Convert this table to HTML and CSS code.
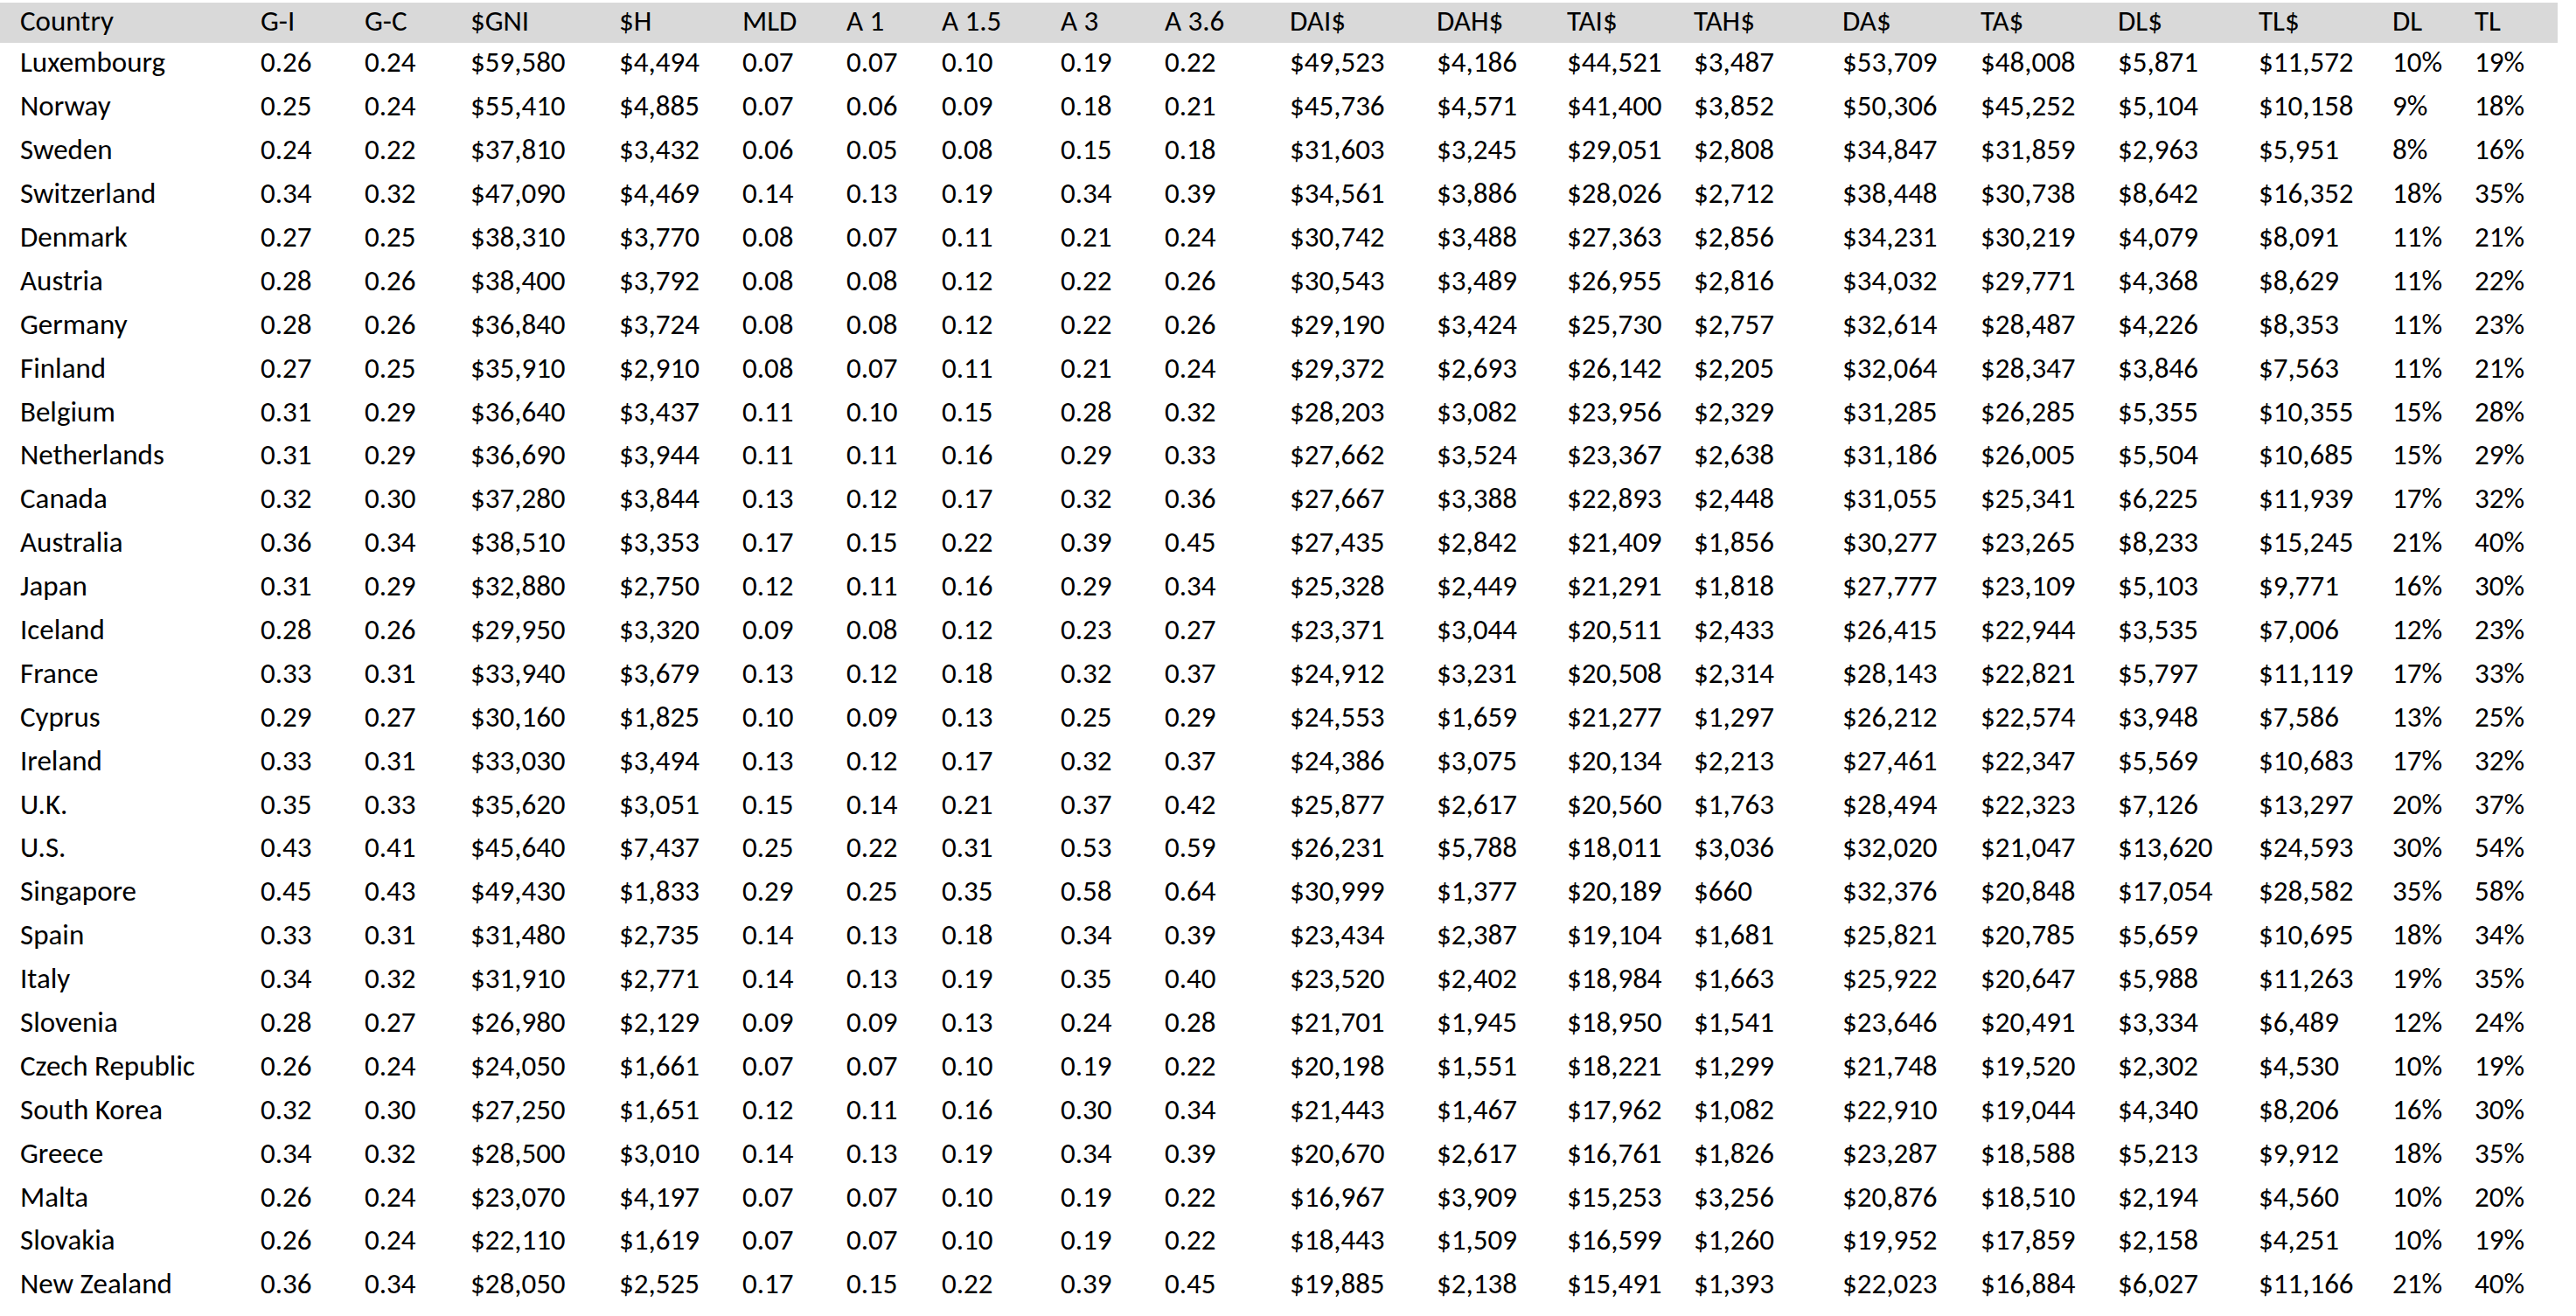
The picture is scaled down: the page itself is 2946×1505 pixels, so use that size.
FILE: index.html
```html
<!DOCTYPE html>
<html lang="en">
<head>
<meta charset="utf-8">
<title>Country inequality table</title>
<link rel="stylesheet" href="styles.css">
</head>
<body>
<table class="data">
<colgroup>
<col class="col-country"><col class="col-gi"><col class="col-gc"><col class="col-gni"><col class="col-h"><col class="col-mld"><col class="col-a1"><col class="col-a15"><col class="col-a3"><col class="col-a36"><col class="col-dai"><col class="col-dah"><col class="col-tai"><col class="col-tah"><col class="col-da"><col class="col-ta"><col class="col-dl-usd"><col class="col-tl-usd"><col class="col-dl"><col class="col-tl">
</colgroup>
<thead>
<tr class="head"><th class="first">Country</th><th>G-I</th><th>G-C</th><th>$GNI</th><th>$H</th><th>MLD</th><th>A 1</th><th>A 1.5</th><th>A 3</th><th>A 3.6</th><th>DAI$</th><th>DAH$</th><th>TAI$</th><th>TAH$</th><th>DA$</th><th>TA$</th><th>DL$</th><th>TL$</th><th>DL</th><th>TL</th></tr>
</thead>
<tbody>
<tr><td class="first">Luxembourg</td><td>0.26</td><td>0.24</td><td>$59,580</td><td>$4,494</td><td>0.07</td><td>0.07</td><td>0.10</td><td>0.19</td><td>0.22</td><td>$49,523</td><td>$4,186</td><td>$44,521</td><td>$3,487</td><td>$53,709</td><td>$48,008</td><td>$5,871</td><td>$11,572</td><td>10%</td><td>19%</td></tr>
<tr><td class="first">Norway</td><td>0.25</td><td>0.24</td><td>$55,410</td><td>$4,885</td><td>0.07</td><td>0.06</td><td>0.09</td><td>0.18</td><td>0.21</td><td>$45,736</td><td>$4,571</td><td>$41,400</td><td>$3,852</td><td>$50,306</td><td>$45,252</td><td>$5,104</td><td>$10,158</td><td>9%</td><td>18%</td></tr>
<tr><td class="first">Sweden</td><td>0.24</td><td>0.22</td><td>$37,810</td><td>$3,432</td><td>0.06</td><td>0.05</td><td>0.08</td><td>0.15</td><td>0.18</td><td>$31,603</td><td>$3,245</td><td>$29,051</td><td>$2,808</td><td>$34,847</td><td>$31,859</td><td>$2,963</td><td>$5,951</td><td>8%</td><td>16%</td></tr>
<tr><td class="first">Switzerland</td><td>0.34</td><td>0.32</td><td>$47,090</td><td>$4,469</td><td>0.14</td><td>0.13</td><td>0.19</td><td>0.34</td><td>0.39</td><td>$34,561</td><td>$3,886</td><td>$28,026</td><td>$2,712</td><td>$38,448</td><td>$30,738</td><td>$8,642</td><td>$16,352</td><td>18%</td><td>35%</td></tr>
<tr><td class="first">Denmark</td><td>0.27</td><td>0.25</td><td>$38,310</td><td>$3,770</td><td>0.08</td><td>0.07</td><td>0.11</td><td>0.21</td><td>0.24</td><td>$30,742</td><td>$3,488</td><td>$27,363</td><td>$2,856</td><td>$34,231</td><td>$30,219</td><td>$4,079</td><td>$8,091</td><td>11%</td><td>21%</td></tr>
<tr><td class="first">Austria</td><td>0.28</td><td>0.26</td><td>$38,400</td><td>$3,792</td><td>0.08</td><td>0.08</td><td>0.12</td><td>0.22</td><td>0.26</td><td>$30,543</td><td>$3,489</td><td>$26,955</td><td>$2,816</td><td>$34,032</td><td>$29,771</td><td>$4,368</td><td>$8,629</td><td>11%</td><td>22%</td></tr>
<tr><td class="first">Germany</td><td>0.28</td><td>0.26</td><td>$36,840</td><td>$3,724</td><td>0.08</td><td>0.08</td><td>0.12</td><td>0.22</td><td>0.26</td><td>$29,190</td><td>$3,424</td><td>$25,730</td><td>$2,757</td><td>$32,614</td><td>$28,487</td><td>$4,226</td><td>$8,353</td><td>11%</td><td>23%</td></tr>
<tr><td class="first">Finland</td><td>0.27</td><td>0.25</td><td>$35,910</td><td>$2,910</td><td>0.08</td><td>0.07</td><td>0.11</td><td>0.21</td><td>0.24</td><td>$29,372</td><td>$2,693</td><td>$26,142</td><td>$2,205</td><td>$32,064</td><td>$28,347</td><td>$3,846</td><td>$7,563</td><td>11%</td><td>21%</td></tr>
<tr><td class="first">Belgium</td><td>0.31</td><td>0.29</td><td>$36,640</td><td>$3,437</td><td>0.11</td><td>0.10</td><td>0.15</td><td>0.28</td><td>0.32</td><td>$28,203</td><td>$3,082</td><td>$23,956</td><td>$2,329</td><td>$31,285</td><td>$26,285</td><td>$5,355</td><td>$10,355</td><td>15%</td><td>28%</td></tr>
<tr><td class="first">Netherlands</td><td>0.31</td><td>0.29</td><td>$36,690</td><td>$3,944</td><td>0.11</td><td>0.11</td><td>0.16</td><td>0.29</td><td>0.33</td><td>$27,662</td><td>$3,524</td><td>$23,367</td><td>$2,638</td><td>$31,186</td><td>$26,005</td><td>$5,504</td><td>$10,685</td><td>15%</td><td>29%</td></tr>
<tr><td class="first">Canada</td><td>0.32</td><td>0.30</td><td>$37,280</td><td>$3,844</td><td>0.13</td><td>0.12</td><td>0.17</td><td>0.32</td><td>0.36</td><td>$27,667</td><td>$3,388</td><td>$22,893</td><td>$2,448</td><td>$31,055</td><td>$25,341</td><td>$6,225</td><td>$11,939</td><td>17%</td><td>32%</td></tr>
<tr><td class="first">Australia</td><td>0.36</td><td>0.34</td><td>$38,510</td><td>$3,353</td><td>0.17</td><td>0.15</td><td>0.22</td><td>0.39</td><td>0.45</td><td>$27,435</td><td>$2,842</td><td>$21,409</td><td>$1,856</td><td>$30,277</td><td>$23,265</td><td>$8,233</td><td>$15,245</td><td>21%</td><td>40%</td></tr>
<tr><td class="first">Japan</td><td>0.31</td><td>0.29</td><td>$32,880</td><td>$2,750</td><td>0.12</td><td>0.11</td><td>0.16</td><td>0.29</td><td>0.34</td><td>$25,328</td><td>$2,449</td><td>$21,291</td><td>$1,818</td><td>$27,777</td><td>$23,109</td><td>$5,103</td><td>$9,771</td><td>16%</td><td>30%</td></tr>
<tr><td class="first">Iceland</td><td>0.28</td><td>0.26</td><td>$29,950</td><td>$3,320</td><td>0.09</td><td>0.08</td><td>0.12</td><td>0.23</td><td>0.27</td><td>$23,371</td><td>$3,044</td><td>$20,511</td><td>$2,433</td><td>$26,415</td><td>$22,944</td><td>$3,535</td><td>$7,006</td><td>12%</td><td>23%</td></tr>
<tr><td class="first">France</td><td>0.33</td><td>0.31</td><td>$33,940</td><td>$3,679</td><td>0.13</td><td>0.12</td><td>0.18</td><td>0.32</td><td>0.37</td><td>$24,912</td><td>$3,231</td><td>$20,508</td><td>$2,314</td><td>$28,143</td><td>$22,821</td><td>$5,797</td><td>$11,119</td><td>17%</td><td>33%</td></tr>
<tr><td class="first">Cyprus</td><td>0.29</td><td>0.27</td><td>$30,160</td><td>$1,825</td><td>0.10</td><td>0.09</td><td>0.13</td><td>0.25</td><td>0.29</td><td>$24,553</td><td>$1,659</td><td>$21,277</td><td>$1,297</td><td>$26,212</td><td>$22,574</td><td>$3,948</td><td>$7,586</td><td>13%</td><td>25%</td></tr>
<tr><td class="first">Ireland</td><td>0.33</td><td>0.31</td><td>$33,030</td><td>$3,494</td><td>0.13</td><td>0.12</td><td>0.17</td><td>0.32</td><td>0.37</td><td>$24,386</td><td>$3,075</td><td>$20,134</td><td>$2,213</td><td>$27,461</td><td>$22,347</td><td>$5,569</td><td>$10,683</td><td>17%</td><td>32%</td></tr>
<tr><td class="first">U.K.</td><td>0.35</td><td>0.33</td><td>$35,620</td><td>$3,051</td><td>0.15</td><td>0.14</td><td>0.21</td><td>0.37</td><td>0.42</td><td>$25,877</td><td>$2,617</td><td>$20,560</td><td>$1,763</td><td>$28,494</td><td>$22,323</td><td>$7,126</td><td>$13,297</td><td>20%</td><td>37%</td></tr>
<tr><td class="first">U.S.</td><td>0.43</td><td>0.41</td><td>$45,640</td><td>$7,437</td><td>0.25</td><td>0.22</td><td>0.31</td><td>0.53</td><td>0.59</td><td>$26,231</td><td>$5,788</td><td>$18,011</td><td>$3,036</td><td>$32,020</td><td>$21,047</td><td>$13,620</td><td>$24,593</td><td>30%</td><td>54%</td></tr>
<tr><td class="first">Singapore</td><td>0.45</td><td>0.43</td><td>$49,430</td><td>$1,833</td><td>0.29</td><td>0.25</td><td>0.35</td><td>0.58</td><td>0.64</td><td>$30,999</td><td>$1,377</td><td>$20,189</td><td>$660</td><td>$32,376</td><td>$20,848</td><td>$17,054</td><td>$28,582</td><td>35%</td><td>58%</td></tr>
<tr><td class="first">Spain</td><td>0.33</td><td>0.31</td><td>$31,480</td><td>$2,735</td><td>0.14</td><td>0.13</td><td>0.18</td><td>0.34</td><td>0.39</td><td>$23,434</td><td>$2,387</td><td>$19,104</td><td>$1,681</td><td>$25,821</td><td>$20,785</td><td>$5,659</td><td>$10,695</td><td>18%</td><td>34%</td></tr>
<tr><td class="first">Italy</td><td>0.34</td><td>0.32</td><td>$31,910</td><td>$2,771</td><td>0.14</td><td>0.13</td><td>0.19</td><td>0.35</td><td>0.40</td><td>$23,520</td><td>$2,402</td><td>$18,984</td><td>$1,663</td><td>$25,922</td><td>$20,647</td><td>$5,988</td><td>$11,263</td><td>19%</td><td>35%</td></tr>
<tr><td class="first">Slovenia</td><td>0.28</td><td>0.27</td><td>$26,980</td><td>$2,129</td><td>0.09</td><td>0.09</td><td>0.13</td><td>0.24</td><td>0.28</td><td>$21,701</td><td>$1,945</td><td>$18,950</td><td>$1,541</td><td>$23,646</td><td>$20,491</td><td>$3,334</td><td>$6,489</td><td>12%</td><td>24%</td></tr>
<tr><td class="first">Czech Republic</td><td>0.26</td><td>0.24</td><td>$24,050</td><td>$1,661</td><td>0.07</td><td>0.07</td><td>0.10</td><td>0.19</td><td>0.22</td><td>$20,198</td><td>$1,551</td><td>$18,221</td><td>$1,299</td><td>$21,748</td><td>$19,520</td><td>$2,302</td><td>$4,530</td><td>10%</td><td>19%</td></tr>
<tr><td class="first">South Korea</td><td>0.32</td><td>0.30</td><td>$27,250</td><td>$1,651</td><td>0.12</td><td>0.11</td><td>0.16</td><td>0.30</td><td>0.34</td><td>$21,443</td><td>$1,467</td><td>$17,962</td><td>$1,082</td><td>$22,910</td><td>$19,044</td><td>$4,340</td><td>$8,206</td><td>16%</td><td>30%</td></tr>
<tr><td class="first">Greece</td><td>0.34</td><td>0.32</td><td>$28,500</td><td>$3,010</td><td>0.14</td><td>0.13</td><td>0.19</td><td>0.34</td><td>0.39</td><td>$20,670</td><td>$2,617</td><td>$16,761</td><td>$1,826</td><td>$23,287</td><td>$18,588</td><td>$5,213</td><td>$9,912</td><td>18%</td><td>35%</td></tr>
<tr><td class="first">Malta</td><td>0.26</td><td>0.24</td><td>$23,070</td><td>$4,197</td><td>0.07</td><td>0.07</td><td>0.10</td><td>0.19</td><td>0.22</td><td>$16,967</td><td>$3,909</td><td>$15,253</td><td>$3,256</td><td>$20,876</td><td>$18,510</td><td>$2,194</td><td>$4,560</td><td>10%</td><td>20%</td></tr>
<tr><td class="first">Slovakia</td><td>0.26</td><td>0.24</td><td>$22,110</td><td>$1,619</td><td>0.07</td><td>0.07</td><td>0.10</td><td>0.19</td><td>0.22</td><td>$18,443</td><td>$1,509</td><td>$16,599</td><td>$1,260</td><td>$19,952</td><td>$17,859</td><td>$2,158</td><td>$4,251</td><td>10%</td><td>19%</td></tr>
<tr><td class="first">New Zealand</td><td>0.36</td><td>0.34</td><td>$28,050</td><td>$2,525</td><td>0.17</td><td>0.15</td><td>0.22</td><td>0.39</td><td>0.45</td><td>$19,885</td><td>$2,138</td><td>$15,491</td><td>$1,393</td><td>$22,023</td><td>$16,884</td><td>$6,027</td><td>$11,166</td><td>21%</td><td>40%</td></tr>
</tbody>
</table>
</body>
</html>
```
FILE: styles.css
```css
html, body {
  margin: 0;
  padding: 0;
  background: #ffffff;
}

body {
  font-family: Carlito, Calibri, Lato, "Open Sans", sans-serif;
  font-size: 33px;
  color: #000000;
}

.data {
  width: 2925px;
  table-layout: fixed;
  border-collapse: collapse;
  border-spacing: 0;
  margin-top: 3px;
}

.col-country { width: 298px; }
.col-gi { width: 119px; }
.col-gc { width: 121px; }
.col-gni { width: 170px; }
.col-h { width: 141px; }
.col-mld { width: 119px; }
.col-a1 { width: 109px; }
.col-a15 { width: 136px; }
.col-a3 { width: 119px; }
.col-a36 { width: 143px; }
.col-dai { width: 168px; }
.col-dah { width: 149px; }
.col-tai { width: 145px; }
.col-tah { width: 170px; }
.col-da { width: 158px; }
.col-ta { width: 157px; }
.col-dl-usd { width: 161px; }
.col-tl-usd { width: 153px; }
.col-dl { width: 94px; }
.col-tl { width: 95px; }

.data th,
.data td {
  padding: 0 0 5px 0;
  line-height: 40px;
  text-align: left;
  font-weight: 400;
  white-space: nowrap;
  vertical-align: middle;
  overflow: hidden;
}

.data .first {
  padding-left: 23px;
}

.head {
  background: #d9d9d9;
  height: 46px;
}

.data tbody tr {
  height: 49.9px;
}
```
